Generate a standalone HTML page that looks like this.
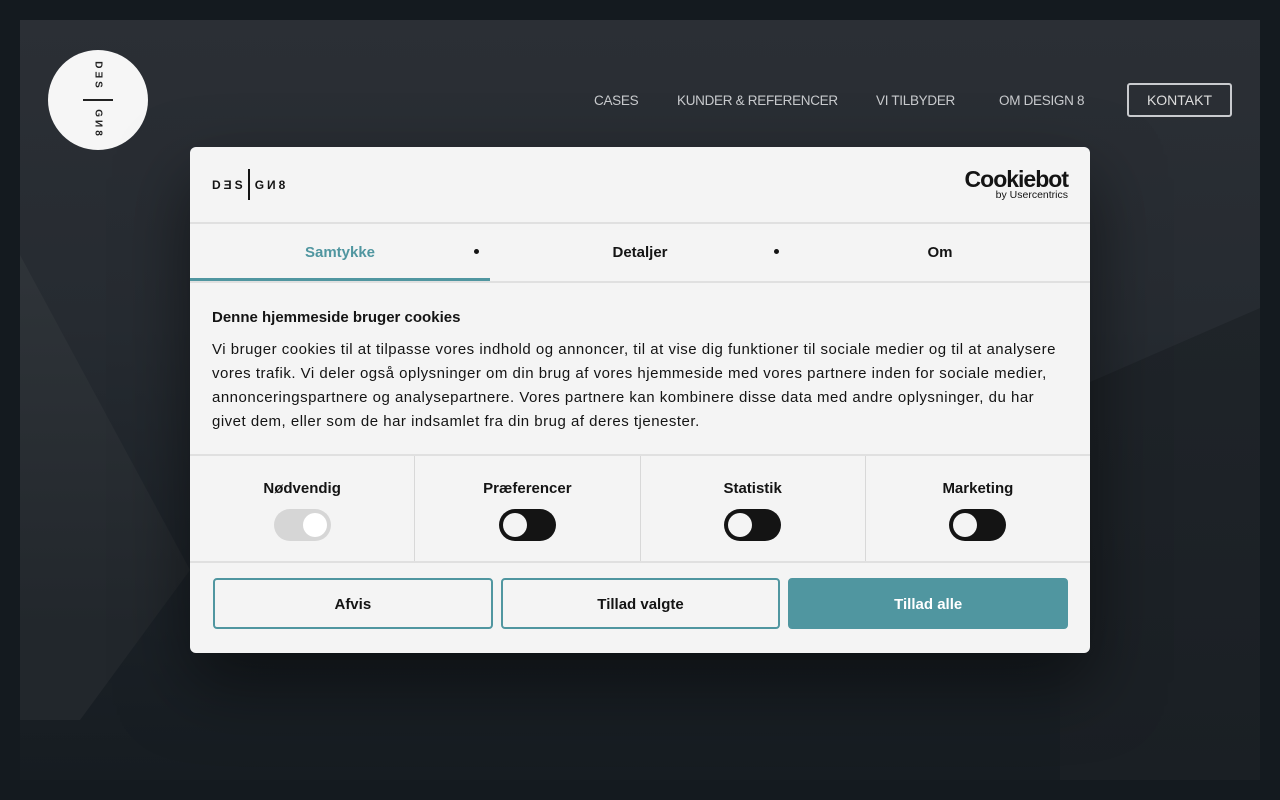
<!DOCTYPE html>
<html><head><meta charset="utf-8"><style>
*{box-sizing:border-box;margin:0;padding:0}
body{width:1280px;height:800px;overflow:hidden;background:#141a1f;font-family:"Liberation Sans",sans-serif;position:relative}
.frame{position:absolute;left:20px;top:20px;width:1240px;height:760px;background:linear-gradient(180deg,#2b2f35 0%,#262b31 40%,#1c2228 75%,#161c21 100%);overflow:hidden}
.shape1{position:absolute;left:0;top:0;width:1240px;height:760px;background:linear-gradient(180deg,#2f3439 30%,#22272c 80%);clip-path:polygon(0 235px,170px 550px,60px 700px,0 700px)}
.shape2{position:absolute;left:0;top:0;width:1240px;height:760px;background:linear-gradient(180deg,#22272c,#1a1f24);clip-path:polygon(1040px 375px,1240px 288px,1240px 760px,1040px 760px)}
.logo{position:absolute;left:48px;top:50px;width:100px;height:100px;border-radius:50%;background:#f6f6f6}
.logo .bar{position:absolute;left:35px;top:49px;width:30px;height:2px;background:#222}
.logo .t{position:absolute;left:50px;font:bold 10px "Liberation Sans",sans-serif;color:#222;transform:translate(-50%,-50%) rotate(90deg);letter-spacing:3px;white-space:nowrap}
.nav{position:absolute;top:93px;font:13.5px "Liberation Sans",sans-serif;color:#c9cbce;letter-spacing:-.3px;white-space:nowrap}
.k{position:absolute;left:1127px;top:83px;width:105px;height:34px;border:2px solid #c9cbce;border-radius:3px;text-align:center;line-height:30px;color:#ddd;font-size:14px}
.dlg{position:absolute;left:190px;top:147px;width:900px;height:506px;background:#f4f4f4;border-radius:6px;box-shadow:0 30px 70px rgba(0,0,0,.5);color:#141414}
.hd{height:77px;border-bottom:2px solid #e0e0e0;position:relative}
.d8{position:absolute;left:22px;top:22px;height:31px;display:flex;align-items:center;font:bold 12px "Liberation Sans",sans-serif;letter-spacing:3px;color:#141414}
.d8 i{display:inline-block;width:2px;height:31px;background:#141414;margin:0 5px 0 2px}
.cb{position:absolute;right:22px;top:20px;text-align:right}
.cb b{font:bold 23px "Liberation Sans",sans-serif;letter-spacing:-1px;display:block;line-height:24px}
.cb small{font-size:10.5px;display:block;margin-top:-2px}
.tabs{height:59px;border-bottom:2px solid #e0e0e0;display:flex;position:relative;font-weight:bold;font-size:15px}
.tabs div{flex:1;text-align:center;line-height:58px}
.tabs .a{color:#5096a0;border-bottom:3px solid #5096a0}
.dot{position:absolute;top:25px;width:5px;height:5px;border-radius:50%;background:#141414}
.bd{padding:26px 20px 0 22px;height:173px;border-bottom:2px solid #e0e0e0}
.bd h3{font-size:15px;margin-bottom:12px}
.bd p{font-size:15px;line-height:24px;letter-spacing:.5px}
.tg{display:flex;height:107px;border-bottom:2px solid #e0e0e0}
.tg div{flex:1;text-align:center;border-left:1px solid #d8d8d8;font-weight:bold;font-size:15px;padding-top:24px}
.tg div:first-child{border-left:none}
.sw{width:57px;height:32px;border-radius:16px;background:#141414;margin:12px auto 0;position:relative}
.sw:after{content:"";position:absolute;left:4px;top:4px;width:24px;height:24px;border-radius:50%;background:#f4f4f4}
.sw.off{background:#d6d6d6}.sw.off:after{left:auto;right:4px;background:#fff}
.bt{display:flex;padding:15px 22px 0 23px;gap:8px}
.bt div{flex:1;height:51px;border:2px solid #5096a0;border-radius:4px;text-align:center;line-height:50px;font-weight:bold;font-size:15px}
.bt .f{background:#5096a0;color:#fff;border-color:#5096a0}
</style></head><body>
<div class="frame"><div class="shape1"></div><div class="shape2"></div></div>
<div class="logo"><span class="t" style="top:26px">DƎS</span><div class="bar"></div><span class="t" style="top:74px">GИ8</span></div>
<span class="nav" style="left:594px">CASES</span>
<span class="nav" style="left:677px">KUNDER &amp; REFERENCER</span>
<span class="nav" style="left:876px">VI TILBYDER</span>
<span class="nav" style="left:999px">OM DESIGN 8</span>
<div class="k">KONTAKT</div>
<div class="dlg">
<div class="hd"><div class="d8">DƎS<i></i>GИ8</div><div class="cb"><b>Cookiebot</b><small>by Usercentrics</small></div></div>
<div class="tabs"><div class="a">Samtykke</div><div>Detaljer</div><div>Om</div><span class="dot" style="left:284px"></span><span class="dot" style="left:584px"></span></div>
<div class="bd"><h3>Denne hjemmeside bruger cookies</h3><p>Vi bruger cookies til at tilpasse vores indhold og annoncer, til at vise dig funktioner til sociale medier og til at analysere vores trafik. Vi deler også oplysninger om din brug af vores hjemmeside med vores partnere inden for sociale medier, annonceringspartnere og analysepartnere. Vores partnere kan kombinere disse data med andre oplysninger, du har<br>givet dem, eller som de har indsamlet fra din brug af deres tjenester.</p></div>
<div class="tg"><div>Nødvendig<div class="sw off"></div></div><div>Præferencer<div class="sw"></div></div><div>Statistik<div class="sw"></div></div><div>Marketing<div class="sw"></div></div></div>
<div class="bt"><div>Afvis</div><div>Tillad valgte</div><div class="f">Tillad alle</div></div>
</div>
</body></html>
